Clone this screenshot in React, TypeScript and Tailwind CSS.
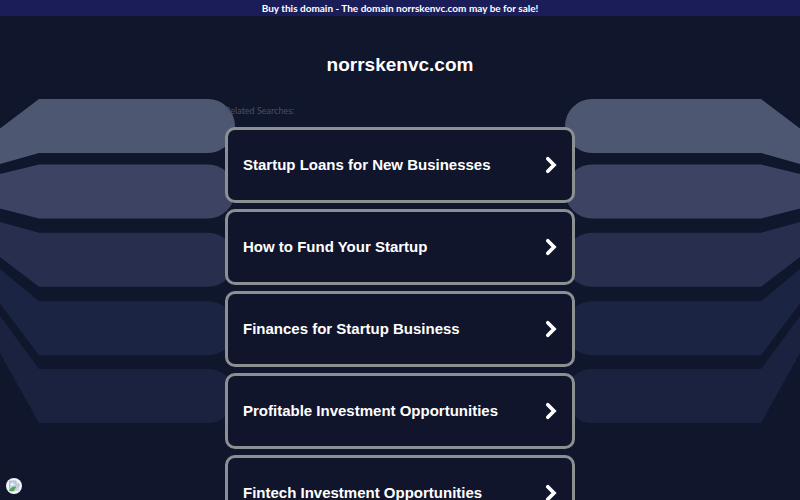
import React from 'react';

const searches = [
    'Startup Loans for New Businesses',
    'How to Fund Your Startup',
    'Finances for Startup Business',
    'Profitable Investment Opportunities',
    'Fintech Investment Opportunities',
];

const ribbons = [
    { fill: '#4e5772', d: 'M0 128.5 39 99H208a27 27 0 0 1 0 54H39L0 164z' },
    { fill: '#3d4463', d: 'M0 174 39 164.5H208a27 27 0 0 1 0 54H39L0 208.5z' },
    { fill: '#282f4e', d: 'M0 222 39 232.8H208a27 27 0 0 1 0 54H39L0 257z' },
    { fill: '#1b2443', d: 'M0 269 39 301.3H208a27 27 0 0 1 0 54H39L0 303.5z' },
    { fill: '#1a2240', d: 'M0 316 39 369H208a27 27 0 0 1 0 54H39L0 353z' },
];

const Ribbons: React.FC = () => (
    <>
        {ribbons.map((ribbon) => (
            <path key={ribbon.fill} d={ribbon.d} fill={ribbon.fill} />
        ))}
    </>
);

const Backdrop: React.FC = () => (
    <svg
        aria-hidden="true"
        viewBox="0 0 800 500"
        className="pointer-events-none absolute top-0 left-1/2 w-[800px] -translate-x-1/2"
    >
        <Ribbons />
        <g transform="translate(800 0) scale(-1 1)">
            <Ribbons />
        </g>
    </svg>
);

const SearchCard: React.FC<{ label: string }> = ({ label }) => (
    <a
        href="#"
        className="flex h-[76px] items-center justify-between rounded-[10px] border-3 border-[#8b9093] bg-[#11152b] px-[15px] text-[15px] font-bold text-white"
    >
        <span>{label}</span>
        <svg aria-hidden="true" viewBox="0 0 12 18" className="h-[18px] w-3" fill="none">
            <path d="M2.8 2.8 9 9l-6.2 6.2" stroke="#fff" strokeWidth="3.7" strokeLinecap="round" />
        </svg>
    </a>
);

const App: React.FC = () => (
    <div className="relative h-screen overflow-hidden bg-[#10162b] font-['Liberation_Sans',sans-serif]">
        <Backdrop />

        <header className="relative bg-[#1b1d58] text-center font-['Lato',sans-serif]">
            <a href="#" className="block text-[10px] leading-4 font-bold text-white">
                Buy this domain - The domain norrskenvc.com may be for sale!
            </a>
        </header>

        <main className="relative mx-auto w-[350px]">
            <h1 className="pt-[37px] text-center text-[19px] leading-6 font-bold text-white">norrskenvc.com</h1>

            <p className="mt-[26px] font-['Lato',sans-serif] text-[9px] leading-4 text-[#4b5063]">
                Related Searches:
            </p>

            <nav className="mt-2 flex flex-col gap-[6px]">
                {searches.map((label) => (
                    <SearchCard key={label} label={label} />
                ))}
            </nav>
        </main>

        {/* Broken favicon badge */}
        <button
            type="button"
            aria-label="Privacy"
            className="absolute bottom-[6px] left-[6px] flex h-4 w-4 items-center justify-center rounded-full bg-[#f1f4f6]"
        >
            <svg aria-hidden="true" viewBox="0 0 12 12" className="h-3 w-3">
                <path d="M1.5 1H8l3 3v2.5L6.5 11h-5z" fill="#c3d5ee" stroke="#a9adb3" strokeWidth=".8" />
                <path d="M1.5 10.5c1-3 3.500-4.500 7-4L5.500 11h-4z" fill="#4fa548" />
                <path d="M8 1v3h3" fill="#fff" stroke="#a9adb3" strokeWidth=".8" />
                <path d="M3 4.5a1 1 0 0 1 2-.3 1 1 0 0 1 1 1H3z" fill="#fff" />
                <path d="M7 11l4-4v4z" fill="#d6dade" />
            </svg>
        </button>
    </div>
);

export default App;
